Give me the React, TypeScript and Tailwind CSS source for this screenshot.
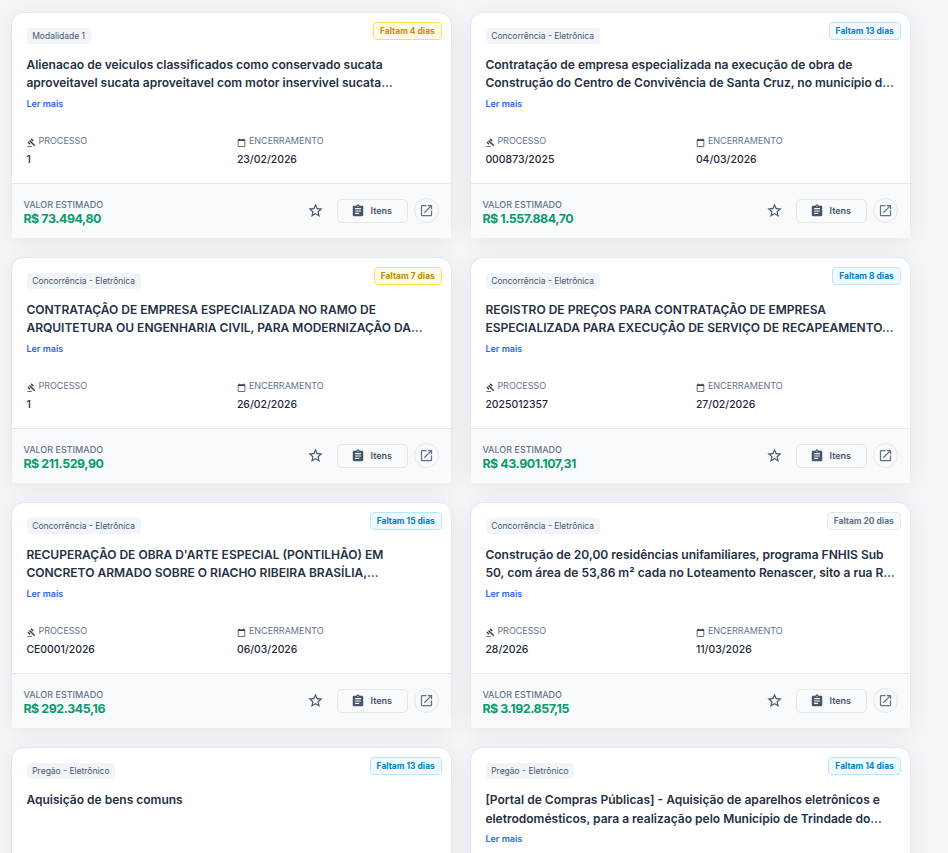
import React from 'react';
import clsx from 'clsx';
import { MdAssignment, MdCalendarToday, MdGavel, MdOpenInNew, MdStarBorder } from 'react-icons/md';

type Tone = 'warning' | 'info' | 'neutral';

interface Bid {
  modality: string;
  deadline: string;
  tone: Tone;
  title: string[];
  process?: string;
  closing?: string;
  value?: string;
}

const bids: Bid[] = [
  {
    modality: 'Modalidade 1',
    deadline: 'Faltam 4 dias',
    tone: 'warning',
    title: [
      'Alienacao de veiculos classificados como conservado sucata',
      'aproveitavel sucata aproveitavel com motor inservivel sucata…',
    ],
    process: '1',
    closing: '23/02/2026',
    value: 'R$ 73.494,80',
  },
  {
    modality: 'Concorrência - Eletrônica',
    deadline: 'Faltam 13 dias',
    tone: 'info',
    title: [
      'Contratação de empresa especializada na execução de obra de',
      'Construção do Centro de Convivência de Santa Cruz, no município d…',
    ],
    process: '000873/2025',
    closing: '04/03/2026',
    value: 'R$ 1.557.884,70',
  },
  {
    modality: 'Concorrência - Eletrônica',
    deadline: 'Faltam 7 dias',
    tone: 'warning',
    title: [
      'CONTRATAÇÃO DE EMPRESA ESPECIALIZADA NO RAMO DE',
      'ARQUITETURA OU ENGENHARIA CIVIL, PARA MODERNIZAÇÃO DA…',
    ],
    process: '1',
    closing: '26/02/2026',
    value: 'R$ 211.529,90',
  },
  {
    modality: 'Concorrência - Eletrônica',
    deadline: 'Faltam 8 dias',
    tone: 'info',
    title: [
      'REGISTRO DE PREÇOS PARA CONTRATAÇÃO DE EMPRESA',
      'ESPECIALIZADA PARA EXECUÇÃO DE SERVIÇO DE RECAPEAMENTO…',
    ],
    process: '2025012357',
    closing: '27/02/2026',
    value: 'R$ 43.901.107,31',
  },
  {
    modality: 'Concorrência - Eletrônica',
    deadline: 'Faltam 15 dias',
    tone: 'info',
    title: [
      "RECUPERAÇÃO DE OBRA D'ARTE ESPECIAL (PONTILHÃO) EM",
      'CONCRETO ARMADO SOBRE O RIACHO RIBEIRA BRASÍLIA,…',
    ],
    process: 'CE0001/2026',
    closing: '06/03/2026',
    value: 'R$ 292.345,16',
  },
  {
    modality: 'Concorrência - Eletrônica',
    deadline: 'Faltam 20 dias',
    tone: 'neutral',
    title: [
      'Construção de 20,00 residências unifamiliares, programa FNHIS Sub',
      '50, com área de 53,86 m² cada no Loteamento Renascer, sito a rua R…',
    ],
    process: '28/2026',
    closing: '11/03/2026',
    value: 'R$ 3.192.857,15',
  },
  {
    modality: 'Pregão - Eletrônico',
    deadline: 'Faltam 13 dias',
    tone: 'info',
    title: ['Aquisição de bens comuns'],
  },
  {
    modality: 'Pregão - Eletrônico',
    deadline: 'Faltam 14 dias',
    tone: 'info',
    title: [
      '[Portal de Compras Públicas] - Aquisição de aparelhos eletrônicos e',
      'eletrodomésticos, para a realização pelo Município de Trindade do…',
    ],
  },
];

const toneClasses: Record<Tone, string> = {
  warning: 'border-[#fde047] bg-[#fefce8] text-[#ca8a04]',
  info: 'border-[#bae6fd] bg-[#f0f9ff] text-[#0284c7]',
  neutral: 'border-[#e2e8f0] bg-[#f8fafc] text-[#64748b]',
};

function Field({ icon, label, value }: { icon: React.ReactNode; label: string; value: string }) {
  return (
    <div>
      <div className="flex h-[14px] items-center gap-[2.5px] text-[9px] text-[#64748b]">
        <span className="mt-[2px] ml-[0.5px] text-[9px] text-[#334155]">{icon}</span>
        {label}
      </div>
      <div className="mt-1 text-[10.45px] leading-[15px] font-medium text-[#1e293b]">{value}</div>
    </div>
  );
}

function BidCard({ bid }: { bid: Bid }) {
  return (
    <article className="flex h-[225.6px] flex-col rounded-[13px] border border-[#e2e8f0] bg-white shadow-[0_4px_24px_rgba(0,0,0,0.06)]">
      <div className="h-[170px] shrink-0 pr-[9px] pl-[14px]">
        <div className="flex h-[43px] items-start justify-between">
          <span className="mt-[14.8px] ml-[0.3px] flex h-4 items-center rounded-[4px] bg-[#f1f5f9] px-[5.5px] text-[8.5px] text-[#475569]">
            {bid.modality}
          </span>
          <span
            className={clsx(
              'mt-[8.9px] flex h-[18px] items-center rounded-[4px] border px-[6px] text-[8.45px] font-bold',
              toneClasses[bid.tone],
            )}
          >
            {bid.deadline}
          </span>
        </div>

        <h3 className="h-[36px] text-[12.02px] leading-[18.1px] font-semibold whitespace-nowrap text-[#253044]">
          {bid.title.map((line) => (
            <span key={line} className="block">
              {line}
            </span>
          ))}
        </h3>
        <div className="mt-[3.9px] h-[15px]">
          {bid.title.length > 1 && (
            <button className="block text-[9px] leading-[15px] font-semibold text-[#1f66f5]">Ler mais</button>
          )}
        </div>

        {bid.process && bid.closing && (
          <div className="mt-[22.9px] grid grid-cols-[210.5px_1fr]">
            <Field icon={<MdGavel />} label="PROCESSO" value={bid.process} />
            <Field icon={<MdCalendarToday />} label="ENCERRAMENTO" value={bid.closing} />
          </div>
        )}
      </div>

      {bid.value && (
        <footer className="-mr-[0.4px] flex h-[55px] shrink-0 items-center border-t border-[#e2e8f0] bg-[#f8fafc] pr-[11.9px] pb-[0.9px] pl-[11px]">
          <div className="flex-1 pt-[1.3px]">
            <div className="text-[9px] leading-[13px] font-medium text-[#64748b]">VALOR ESTIMADO</div>
            <div className="text-[12.4px] leading-[15px] font-bold tracking-[-0.42px] text-[#0a9a6c]">{bid.value}</div>
          </div>
          <button className="mr-[12.8px] text-[17px] text-[#475569]">
            <MdStarBorder />
          </button>
          <button className="mr-[6px] flex h-6 w-[71px] items-center justify-center gap-[5.5px] rounded-[5px] border border-[#e2e8f0] pr-[2.5px] text-[9px] font-semibold text-[#475569]">
            <MdAssignment className="size-[14px]" />
            Itens
          </button>
          <button className="flex size-[25px] items-center justify-center rounded-full border border-[#e2e8f0] text-[15px] text-[#64748b]">
            <MdOpenInNew />
          </button>
        </footer>
      )}
    </article>
  );
}

export default function App() {
  return (
    <main className="h-[853px] overflow-hidden bg-[#f3f5f9] pt-[12.3px] pl-[11.4px] font-['Inter',sans-serif]">
      <div className="grid grid-cols-[440.4px_440.4px] gap-x-[18.6px] gap-y-[19.46px]">
        {bids.map((bid) => (
          <BidCard key={bid.title[0]} bid={bid} />
        ))}
      </div>
    </main>
  );
}
